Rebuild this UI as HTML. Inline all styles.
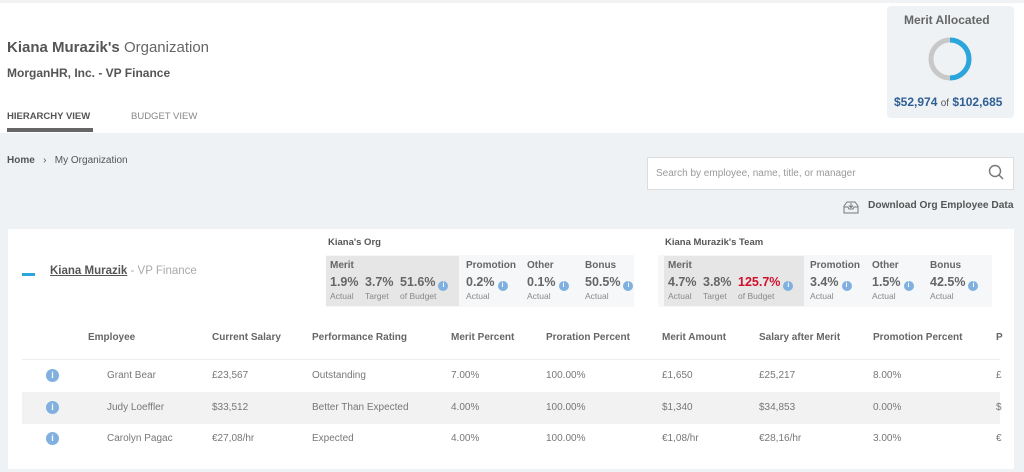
<!DOCTYPE html>
<html><head><meta charset="utf-8"><style>
*{margin:0;padding:0;box-sizing:border-box}
body{width:1024px;height:472px;overflow:hidden;background:#eef2f5;font-family:"Liberation Sans",Arial,sans-serif;color:#555;position:relative}
.a{position:absolute;white-space:nowrap}
.top{position:absolute;left:0;top:0;width:1024px;height:133px;background:#fff;border-top:3px solid #f0f2f4}
.b{font-weight:bold}
.info{display:inline-block;width:10px;height:10px;border-radius:50%;background:#7fb0df;vertical-align:-1px;margin-left:3px;color:#fff;font-size:7px;line-height:10px;text-align:center;font-weight:bold}
.ic{position:absolute;width:13px;height:13px;border-radius:50%;background:#7fb0df;color:#fff;font-size:9px;line-height:13px;text-align:center;font-weight:bold}
.big{font-size:12.5px;font-weight:bold;color:#666}
.sm{font-size:8.5px;color:#888}
.lbl{font-size:10px;color:#666;font-weight:bold}
.th{font-size:10px;font-weight:bold;color:#666;top:332px}
.td{font-size:10px;color:#777}
</style></head><body>
<div class="top"></div>
<div class="a" style="left:7px;top:39px;font-size:15px;color:#666"><b style="color:#555">Kiana Murazik's</b> Organization</div>
<div class="a b" style="left:7px;top:66px;font-size:12px;color:#555">MorganHR, Inc. - VP Finance</div>
<div class="a b" style="left:7px;top:111px;font-size:9.5px;color:#555">HIERARCHY VIEW</div>
<div class="a" style="left:7px;top:128px;width:86px;height:4px;background:#666"></div>
<div class="a" style="left:131px;top:111px;font-size:9.5px;color:#888">BUDGET VIEW</div>

<div class="a" style="left:887px;top:6px;width:127px;height:112px;background:#eef2f5;border-radius:4px"></div>
<div class="a b" style="left:904px;top:13px;font-size:12px;color:#666">Merit Allocated</div>
<svg class="a" style="left:927px;top:36px" width="46" height="46"><circle cx="23" cy="23" r="19" fill="none" stroke="#c8c8c8" stroke-width="5"/><path d="M23 4 A19 19 0 0 1 23 42" fill="none" stroke="#2aa6dc" stroke-width="5"/></svg>
<div class="a b" style="left:894px;top:95px;font-size:12px;color:#2f5f93">$52,974 <span style="font-weight:normal;font-size:10px;color:#555">of</span> $102,685</div>

<div class="a" style="left:7px;top:155px;font-size:10px;color:#555"><b>Home</b> &nbsp;&nbsp;›&nbsp;&nbsp; My Organization</div>
<div class="a" style="left:647px;top:157px;width:367px;height:33px;background:#fff;border:1px solid #ddd"></div>
<div class="a" style="left:656px;top:168px;font-size:10px;color:#999">Search by employee, name, title, or manager</div>
<svg class="a" style="left:988px;top:164px" width="16" height="16"><circle cx="7" cy="7" r="5.5" fill="none" stroke="#777" stroke-width="1.4"/><path d="M11 11 L15 15" stroke="#777" stroke-width="1.5"/></svg>
<svg class="a" style="left:842px;top:199px" width="18" height="16"><path d="M2 7 L5 3 H13 L16 7 V14 H2 Z M2 8 H6 L7 10 H11 L12 8 H16 M9 4 V8 M7 6.5 L9 8.5 L11 6.5" fill="none" stroke="#777" stroke-width="1"/></svg>
<div class="a b" style="left:868px;top:200px;font-size:10.2px;color:#555">Download Org Employee Data</div>

<div class="a" style="left:8px;top:229px;width:1006px;height:240px;background:#fff"></div>
<div class="a" style="left:22px;top:273px;width:13px;height:3px;background:#2aa6dc"></div>
<div class="a" style="left:50px;top:265px;font-size:11.5px;color:#aaa"><b style="color:#555;text-decoration:underline">Kiana Murazik</b> - VP Finance</div>

<div class="a b" style="left:328px;top:237px;font-size:9.5px;color:#555">Kiana's Org</div>
<div class="a" style="left:326px;top:255px;width:308px;height:52px;background:#f6f7f8"></div>
<div class="a" style="left:326px;top:256px;width:133px;height:50px;background:#e6e6e6"></div>
<div class="a b" style="left:665px;top:237px;font-size:9.5px;color:#555">Kiana Murazik's Team</div>
<div class="a" style="left:658px;top:255px;width:334px;height:52px;background:#f6f7f8"></div>
<div class="a" style="left:664px;top:256px;width:140px;height:50px;background:#e6e6e6"></div>

<div class="a lbl" style="left:330px;top:260px">Merit</div>
<div class="a big" style="left:330px;top:275px">1.9%</div><div class="a sm" style="left:330px;top:291px">Actual</div>
<div class="a big" style="left:365px;top:275px">3.7%</div><div class="a sm" style="left:365px;top:291px">Target</div>
<div class="a big" style="left:400px;top:275px">51.6%<span class="info">i</span></div><div class="a sm" style="left:400px;top:291px">of Budget</div>
<div class="a lbl" style="left:466px;top:260px">Promotion</div>
<div class="a big" style="left:466px;top:275px">0.2%<span class="info">i</span></div><div class="a sm" style="left:466px;top:291px">Actual</div>
<div class="a lbl" style="left:527px;top:260px">Other</div>
<div class="a big" style="left:527px;top:275px">0.1%<span class="info">i</span></div><div class="a sm" style="left:527px;top:291px">Actual</div>
<div class="a lbl" style="left:585px;top:260px">Bonus</div>
<div class="a big" style="left:585px;top:275px">50.5%<span class="info">i</span></div><div class="a sm" style="left:585px;top:291px">Actual</div>

<div class="a lbl" style="left:668px;top:260px">Merit</div>
<div class="a big" style="left:668px;top:275px">4.7%</div><div class="a sm" style="left:668px;top:291px">Actual</div>
<div class="a big" style="left:703px;top:275px">3.8%</div><div class="a sm" style="left:703px;top:291px">Target</div>
<div class="a big" style="left:738px;top:275px;color:#d0102a">125.7%<span class="info">i</span></div><div class="a sm" style="left:738px;top:291px">of Budget</div>
<div class="a lbl" style="left:810px;top:260px">Promotion</div>
<div class="a big" style="left:810px;top:275px">3.4%<span class="info">i</span></div><div class="a sm" style="left:810px;top:291px">Actual</div>
<div class="a lbl" style="left:872px;top:260px">Other</div>
<div class="a big" style="left:872px;top:275px">1.5%<span class="info">i</span></div><div class="a sm" style="left:872px;top:291px">Actual</div>
<div class="a lbl" style="left:930px;top:260px">Bonus</div>
<div class="a big" style="left:930px;top:275px">42.5%<span class="info">i</span></div><div class="a sm" style="left:930px;top:291px">Actual</div>

<div class="a th" style="left:88px">Employee</div>
<div class="a th" style="left:212px">Current Salary</div>
<div class="a th" style="left:312px">Performance Rating</div>
<div class="a th" style="left:451px">Merit Percent</div>
<div class="a th" style="left:546px">Proration Percent</div>
<div class="a th" style="left:662px">Merit Amount</div>
<div class="a th" style="left:759px">Salary after Merit</div>
<div class="a th" style="left:873px">Promotion Percent</div>
<div class="a th" style="left:996px">P</div>
<div class="a" style="left:22px;top:359px;width:978px;height:1px;background:#eee"></div>
<div class="a" style="left:22px;top:392px;width:978px;height:32px;background:#f2f2f2"></div>

<div class="ic" style="left:46px;top:369px">i</div>
<div class="ic" style="left:46px;top:401px">i</div>
<div class="ic" style="left:46px;top:432px">i</div>

<div class="a td" style="left:107px;top:370px">Grant Bear</div>
<div class="a td" style="left:212px;top:370px">£23,567</div>
<div class="a td" style="left:312px;top:370px">Outstanding</div>
<div class="a td" style="left:451px;top:370px">7.00%</div>
<div class="a td" style="left:546px;top:370px">100.00%</div>
<div class="a td" style="left:662px;top:370px">£1,650</div>
<div class="a td" style="left:759px;top:370px">£25,217</div>
<div class="a td" style="left:873px;top:370px">8.00%</div>
<div class="a td" style="left:996px;top:370px">£</div>

<div class="a td" style="left:107px;top:402px">Judy Loeffler</div>
<div class="a td" style="left:212px;top:402px">$33,512</div>
<div class="a td" style="left:312px;top:402px">Better Than Expected</div>
<div class="a td" style="left:451px;top:402px">4.00%</div>
<div class="a td" style="left:546px;top:402px">100.00%</div>
<div class="a td" style="left:662px;top:402px">$1,340</div>
<div class="a td" style="left:759px;top:402px">$34,853</div>
<div class="a td" style="left:873px;top:402px">0.00%</div>
<div class="a td" style="left:996px;top:402px">$</div>

<div class="a td" style="left:107px;top:433px">Carolyn Pagac</div>
<div class="a td" style="left:212px;top:433px">€27,08/hr</div>
<div class="a td" style="left:312px;top:433px">Expected</div>
<div class="a td" style="left:451px;top:433px">4.00%</div>
<div class="a td" style="left:546px;top:433px">100.00%</div>
<div class="a td" style="left:662px;top:433px">€1,08/hr</div>
<div class="a td" style="left:759px;top:433px">€28,16/hr</div>
<div class="a td" style="left:873px;top:433px">3.00%</div>
<div class="a td" style="left:996px;top:433px">€</div>
</body></html>
